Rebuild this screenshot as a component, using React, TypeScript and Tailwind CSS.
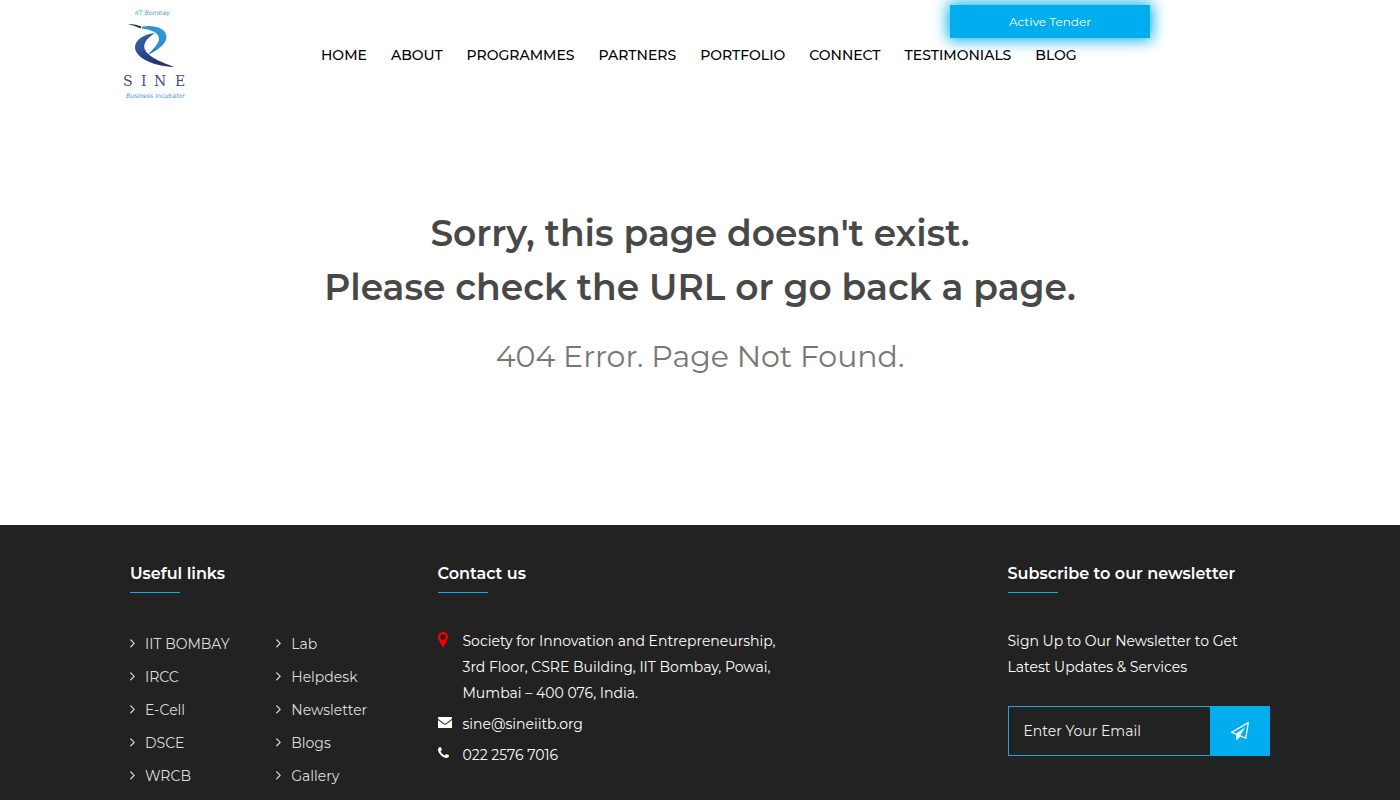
import type { ReactNode } from "react";

const navItems = ["HOME", "ABOUT", "PROGRAMMES", "PARTNERS", "PORTFOLIO", "CONNECT", "TESTIMONIALS", "BLOG"];
const linkColumns = [
  ["IIT BOMBAY", "IRCC", "E-Cell", "DSCE", "WRCB"],
  ["Lab", "Helpdesk", "Newsletter", "Blogs", "Gallery"],
];

const paths = {
  angle:
    "M1171 960q0 13-10 23l-466 466q-10 10-23 10t-23-10l-50-50q-10-10-10-23t10-23l393-393-393-393q-10-10-10-23t10-23l50-50q10-10 23-10t23 10l466 466q10 10 10 23z",
  marker:
    "M5 0C2.200 0 0 2.200 0 5C0 6.300 .4 7.300 1 8.500L5 16L9 8.500C9.600 7.300 10 6.300 10 5C10 2.200 7.800 0 5 0ZM5 2.300A2.700 2.700 0 1 0 5 7.700A2.700 2.700 0 1 0 5 2.300Z",
  envelope:
    "M.6 0H13.400Q14 0 14 .6V1.700L8.200 6.200Q7 7 5.800 6.200L0 1.700V.6Q0 0 .6 0ZM0 3L5.300 7.100Q7 8.200 8.700 7.100L14 3V10.400Q14 11 13.400 11H.6Q0 11 0 10.400Z",
  phone:
    "M1600 1240q0 27-10 70.5t-21 68.5q-21 50-122 106-94 51-186 51-27 0-53-3.5t-57.5-12.5-47-14.5-55.5-20.5-49-18q-98-35-175-83-127-79-264-216t-216-264q-48-77-83-175-3-9-18-49t-20.5-55.5-14.5-47-12.5-57.5-3.5-53q0-92 51-186 56-101 106-122 25-11 68.5-21t70.5-10q14 0 21 3 18 6 53 76 11 19 30 54t35 63.5 31 53.5q3 4 17.5 25t21.5 35.5 7 28.5q0 20-28.5 50t-62 55-62 53-28.5 46q0 9 5 22.5t8.5 20.5 14 24 11.5 19q76 137 174 235t235 174q2 1 19 11.5t24 14 20.5 8.5 22.5 5q18 0 46-28.5t53-62 55-62 50-28.5q14 0 28.5 7t35.5 21.5 25 17.5q25 15 53.5 31t63.5 35 54 30q70 35 76 53 3 7 3 21z",
  plane:
    "M1764 11q33 24 27 64l-256 1536q-5 29-32 45-14 8-31 8-11 0-24-5l-527-215-298 327q-18 21-47 21-14 0-23-4-19-7-30-23.5t-11-36.5v-452l-472-193q-37-14-40-55-3-39 32-59l1664-960q35-21 68 2zm-342 1499l221-1323-1434 827 336 137 863-639-478 797z",
};

function Icon({ d, viewBox, className }: { d: string; viewBox: string; className: string }) {
  return (
    <svg viewBox={viewBox} className={className} fill="currentColor" fillRule="evenodd" aria-hidden="true">
      <path d={d} />
    </svg>
  );
}

function Logo() {
  return (
    <a href="#" aria-label="SINE home" className="block">
      <svg viewBox="0 0 90 110" className="h-[110px] w-[90px]">
        <defs>
          <linearGradient id="sky" x1="0" y1="1" x2="1" y2="0">
            <stop offset="0" stopColor="#2a62ae" />
            <stop offset="0.5" stopColor="#2a8fd0" />
            <stop offset="1" stopColor="#2c9ddb" />
          </linearGradient>
          <linearGradient id="navy" x1="0" y1="0" x2="1" y2="1">
            <stop offset="0" stopColor="#3b6cb3" />
            <stop offset="0.5" stopColor="#27408a" />
            <stop offset="1" stopColor="#24266a" />
          </linearGradient>
        </defs>
        <text x="25" y="15" fontSize="6.2" fontStyle="italic" fontFamily="DejaVu Sans, sans-serif" fill="#3fa0d4">IIT Bombay</text>
        <path d="M18 24Q25 23.500 31.500 26.500L30.500 28.500Q25 25.500 18 24Z" fill="#2c3050" />
        <path d="M32.500 26.500C43 24.500 57 28 56.500 37C56 45 46 51 37 55.500C43 49 49 44 49 38.500C48.500 32 40 29.500 32 28.500Z" fill="url(#sky)" />
        <path d="M45 33C33 34.500 25 40 25 47.500C25.500 58 43 66 64 67C52 62 37 57 34.500 48.500C33 42 39 37 45 33Z" fill="url(#navy)" />
        <g fontSize="14" fontFamily="DejaVu Serif, serif" fill="#3f4c88">
          <text x="13" y="86">S</text>
          <text x="31" y="86">I</text>
          <text x="44" y="86">N</text>
          <text x="65" y="86">E</text>
        </g>
        <text x="16" y="98" fontSize="6.2" fontStyle="italic" fontFamily="DejaVu Sans, sans-serif" fill="#3c9bd0">Business Incubator</text>
      </svg>
    </a>
  );
}

function FooterTitle({ children }: { children: ReactNode }) {
  return (
    <>
      <h3 className="text-base leading-6 font-semibold text-white">{children}</h3>
      <div className="mt-1.5 h-px w-[50px] bg-[#1ba6dc]" />
    </>
  );
}

export default function App() {
  return (
    <div className="flex min-h-screen flex-col bg-white font-['Montserrat','Inter',sans-serif]">
      <header className="relative mx-auto flex w-full max-w-[1180px] items-center">
        <Logo />
        <nav className="ml-[121px] flex gap-6 text-sm leading-5 font-medium text-black">
          {navItems.map((item) => (
            <a key={item} href="#" className="whitespace-nowrap">{item}</a>
          ))}
        </nav>
        <a
          href="#"
          className="absolute top-[5px] right-[140px] flex h-[33px] w-[200px] items-center justify-center bg-[#00adef] text-xs text-white shadow-[0_0_15px_2px_#00adef]"
        >
          Active Tender
        </a>
      </header>

      <main className="pt-24 pb-[146px] text-center">
        <h1 className="text-4xl leading-[54px] font-semibold text-[#484848]">
          Sorry, this page doesn't exist.
          <br />
          Please check the URL or go back a page.
        </h1>
        <p className="mt-5 text-3xl leading-[45px] text-[#777777]">404 Error. Page Not Found.</p>
      </main>

      <footer className="grow bg-[#222222] pt-[37px] text-sm text-white">
        <div className="mx-auto grid w-full max-w-[1140px] grid-cols-4 gap-x-[30px]">
          <section>
            <FooterTitle>Useful links</FooterTitle>
            <div className="mt-[35px] grid grid-cols-2 gap-x-[30px]">
              {linkColumns.map((column) => (
                <ul key={column[0]}>
                  {column.map((label) => (
                    <li key={label} className="h-[33px]">
                      <a href="#" className="flex items-center gap-2.5 leading-[33px] whitespace-nowrap text-[#dddddd]">
                        <Icon d={paths.angle} viewBox="576 480 608 992" className="mb-0.5 h-[9px] w-[5px]" />
                        {label}
                      </a>
                    </li>
                  ))}
                </ul>
              ))}
            </div>
          </section>

          <section className="col-span-2 pl-[15px]">
            <FooterTitle>Contact us</FooterTitle>
            <ul className="mt-[35px] space-y-[5px] leading-[26px]">
              <li className="flex">
                <span className="w-[25px] pt-1 text-[#f50000]">
                  <Icon d={paths.marker} viewBox="0 0 10 16" className="h-4 w-2.5" />
                </span>
                <address className="not-italic">
                  Society for Innovation and Entrepreneurship,
                  <br />
                  3rd Floor, CSRE Building, IIT Bombay, Powai,
                  <br />
                  Mumbai – 400 076, India.
                </address>
              </li>
              <li className="flex">
                <span className="w-[25px] pt-1.5">
                  <Icon d={paths.envelope} viewBox="0 0 14 11" className="h-[11px] w-3.5" />
                </span>
                <a href="#">sine@sineiitb.org</a>
              </li>
              <li className="flex">
                <span className="w-[25px] pt-[5px]">
                  <Icon d={paths.phone} viewBox="192 128 1408 1408" className="size-[11px]" />
                </span>
                <a href="#">022 2576 7016</a>
              </li>
            </ul>
          </section>

          <section>
            <FooterTitle>Subscribe to our newsletter</FooterTitle>
            <p className="mt-[35px] leading-[26px]">
              Sign Up to Our Newsletter to Get
              <br />
              Latest Updates &amp; Services
            </p>
            <form className="mt-[26px] flex h-[50px]" onSubmit={(event) => event.preventDefault()}>
              <input
                type="email"
                aria-label="Email address"
                placeholder="Enter Your Email"
                className="w-full min-w-0 flex-1 border border-r-0 border-[#1ba6dc] bg-transparent px-[15px] text-white outline-none placeholder:text-[#eeeeee]"
              />
              <button type="submit" aria-label="Subscribe" className="flex w-[60px] shrink-0 items-center justify-center bg-[#00adef] text-white">
                <Icon d={paths.plane} viewBox="0 0 1792 1792" className="size-[18px]" />
              </button>
            </form>
          </section>
        </div>
      </footer>
    </div>
  );
}
